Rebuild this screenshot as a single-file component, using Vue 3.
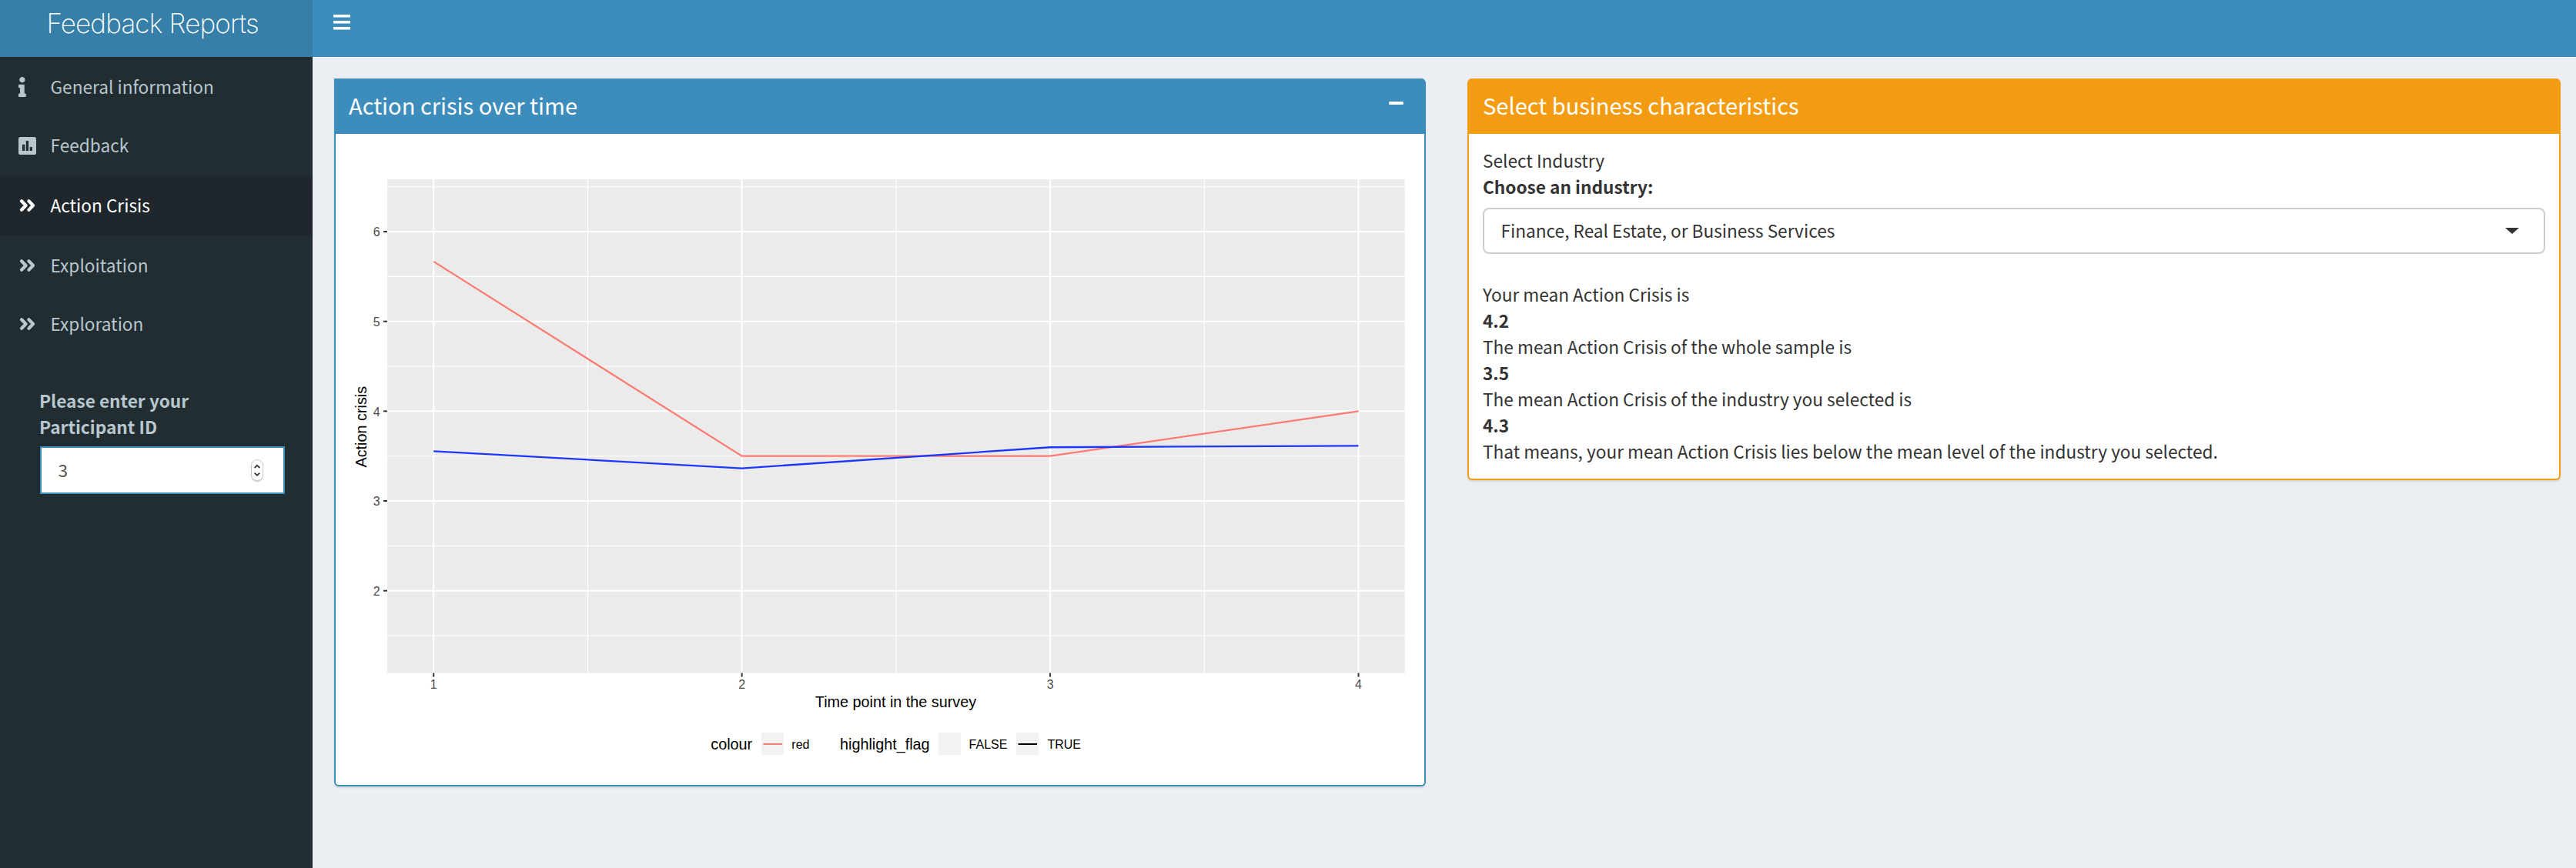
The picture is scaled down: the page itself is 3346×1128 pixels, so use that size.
<script setup>
const menu = [
  { label: 'General information', icon: 'info' },
  { label: 'Feedback', icon: 'poll' },
  { label: 'Action Crisis', icon: 'angles', active: true },
  { label: 'Exploitation', icon: 'angles' },
  { label: 'Exploration', icon: 'angles' },
]

const sx = (v) => 563.2 + (v - 1) * 400.45
const sy = (v) => 767.7 - (v - 2) * 116.67
const toPoints = (values) => values.map((v, i) => `${sx(i + 1)},${sy(v)}`).join(' ')

const xTicks = [1, 2, 3, 4]
const xMinor = [1.5, 2.5, 3.5]
const yTicks = [2, 3, 4, 5, 6]
const yMinor = [1.5, 2.5, 3.5, 4.5, 5.5, 6.5]
const participant = toPoints([5.667, 3.5, 3.5, 4])
const sample = toPoints([3.555, 3.364, 3.598, 3.615])

const summary = [
  { text: 'Your mean Action Crisis is' },
  { text: '4.2', bold: true },
  { text: 'The mean Action Crisis of the whole sample is' },
  { text: '3.5', bold: true },
  { text: 'The mean Action Crisis of the industry you selected is' },
  { text: '4.3', bold: true },
  { text: 'That means, your mean Action Crisis lies below the mean level of the industry you selected.' },
]
</script>

<template>
  <div class="page">
    <header class="topbar">
      <div class="logo">Feedback Reports</div>
      <nav class="navbar">
        <svg class="bars" width="22" height="20" viewBox="0 0 22 20" fill="#fff">
          <rect y="0" width="22" height="3.4" rx=".6" />
          <rect y="8" width="22" height="3.4" rx=".6" />
          <rect y="16" width="22" height="3.4" rx=".6" />
        </svg>
      </nav>
    </header>

    <div class="main">
      <aside class="sidebar">
        <ul class="menu">
          <li v-for="item in menu" :key="item.label" :class="{ active: item.active }">
            <span class="icon">
              <svg v-if="item.icon === 'info'" width="9.75" height="26" viewBox="0 0 192 512" fill="currentColor">
                <path d="M20 424.229h20V279.771H20c-11.046 0-20-8.954-20-20V212c0-11.046 8.954-20 20-20h112c11.046 0 20 8.954 20 20v212.229h20c11.046 0 20 8.954 20 20V492c0 11.046-8.954 20-20 20H20c-11.046 0-20-8.954-20-20v-47.771c0-11.046 8.954-20 20-20zM96 0C56.235 0 24 32.235 24 72s32.235 72 72 72 72-32.235 72-72S135.764 0 96 0z" />
              </svg>
              <svg v-else-if="item.icon === 'poll'" width="23" height="23" viewBox="0 0 23 23">
                <rect width="23" height="23" rx="2.6" fill="currentColor" />
                <rect x="5" y="9.8" width="3.3" height="8.2" rx=".6" fill="#222d32" />
                <rect x="9.8" y="5" width="3.3" height="13" rx=".6" fill="#222d32" />
                <rect x="14.7" y="13" width="3.3" height="5" rx=".6" fill="#222d32" />
              </svg>
              <svg v-else width="23" height="18" viewBox="0 0 23 18" fill="none" stroke="currentColor" stroke-width="4.2" stroke-linecap="round" stroke-linejoin="round">
                <path d="M4 3.2L9.6 9L4 14.8M13.4 3.2L19 9L13.4 14.8" />
              </svg>
            </span>
            <span>{{ item.label }}</span>
          </li>
        </ul>
        <div class="field">
          <div class="field-label">Please enter your<br />Participant ID</div>
          <div class="number">
            <span>3</span>
            <span class="spinner">
              <svg width="14" height="24" viewBox="0 0 14 24" fill="none" stroke="#3a3a3a" stroke-width="1.9">
                <path d="M3.6 9L7 5.9L10.4 9M3.6 15.6L7 18.7L10.4 15.6" />
              </svg>
            </span>
          </div>
        </div>
      </aside>

      <main class="content">
        <section class="box primary">
          <div class="box-header">
            <h3>Action crisis over time</h3>
            <span class="collapse"></span>
          </div>
          <svg class="plot" width="1414" height="846" viewBox="436 174 1414 846">
            <rect x="503" y="233" width="1321.7" height="641.6" fill="#ebebeb" />
            <g stroke="#fff" stroke-width="1.1">
              <line v-for="v in yMinor" :key="'ym' + v" x1="503" x2="1824.7" :y1="sy(v)" :y2="sy(v)" />
              <line v-for="v in xMinor" :key="'xm' + v" y1="233" y2="874.6" :x1="sx(v)" :x2="sx(v)" />
            </g>
            <g stroke="#fff" stroke-width="2">
              <line v-for="v in yTicks" :key="'y' + v" x1="503" x2="1824.7" :y1="sy(v)" :y2="sy(v)" />
              <line v-for="v in xTicks" :key="'x' + v" y1="233" y2="874.6" :x1="sx(v)" :x2="sx(v)" />
            </g>
            <g stroke="#333" stroke-width="2">
              <line v-for="v in yTicks" :key="'yt' + v" x1="498" x2="503" :y1="sy(v)" :y2="sy(v)" />
              <line v-for="v in xTicks" :key="'xt' + v" y1="874.6" y2="879.6" :x1="sx(v)" :x2="sx(v)" />
            </g>
            <g class="tick">
              <text v-for="v in yTicks" :key="'yl' + v" x="493.6" :y="sy(v) + 6.3" text-anchor="end">{{ v }}</text>
              <text v-for="v in xTicks" :key="'xl' + v" :x="sx(v)" y="895.3" text-anchor="middle">{{ v }}</text>
            </g>
            <polyline :points="participant" fill="none" stroke="#fb7b72" stroke-width="2.3" />
            <polyline :points="sample" fill="none" stroke="#1c36ff" stroke-width="2.3" />

            <g class="title">
              <text x="1163.5" y="918.5" text-anchor="middle">Time point in the survey</text>
              <text transform="translate(476.3 554.7) rotate(-90)" text-anchor="middle">Action crisis</text>
              <text x="923.3" y="974">colour</text>
              <text x="1091" y="974">highlight_flag</text>
            </g>
            <g fill="#f2f2f2">
              <rect x="989" y="952" width="29" height="29" />
              <rect x="1219" y="952" width="29" height="29" />
              <rect x="1320" y="952" width="29" height="29" />
            </g>
            <line x1="991.4" x2="1016" y1="967" y2="967" stroke="#fb7b72" stroke-width="2" />
            <line x1="1322.6" x2="1347" y1="967" y2="967" stroke="#000" stroke-width="2" />
            <g class="legend">
              <text x="1028.3" y="973.2">red</text>
              <text x="1258.6" y="973.2">FALSE</text>
              <text x="1360.4" y="973.2">TRUE</text>
            </g>
          </svg>
        </section>

        <section class="box warning">
          <div class="box-header">
            <h3>Select business characteristics</h3>
          </div>
          <div class="box-body">
            <div>Select Industry</div>
            <div class="bold">Choose an industry:</div>
            <div class="select">
              <span>Finance, Real Estate, or Business Services</span>
              <i class="caret"></i>
            </div>
            <div v-for="line in summary" :key="line.text" :class="{ bold: line.bold }">{{ line.text }}</div>
          </div>
        </section>
      </main>
    </div>
  </div>
</template>

<style>
body {
  margin: 0;
  background: #ebeef3;
}
</style>

<style scoped>
.page {
  width: 3346px;
  height: 1128px;
  display: flex;
  flex-direction: column;
  overflow: hidden;
  background: #ebeef3;
  color: #333;
  font: 400 22.65px/34px "Noto Sans CJK SC", "Noto Sans", sans-serif;
}
.topbar {
  display: flex;
  height: 74px;
  flex: none;
}
.logo {
  width: 406px;
  box-sizing: border-box;
  padding: 1px 0 0 60.5px;
  background: #367fa9;
  color: #fff;
  font: 160 35px/59px Inter, "Liberation Sans", sans-serif;
  letter-spacing: -0.85px;
  white-space: nowrap;
}
.navbar {
  flex: 1;
  padding: 19px 27px;
  box-sizing: border-box;
  background: #3c8dbc;
}
.bars {
  display: block;
}
.main {
  display: flex;
  flex: 1;
}
.sidebar {
  width: 406px;
  flex: none;
  background: #222d32;
  color: #b8c7ce;
}
.menu {
  list-style: none;
  margin: 0;
  padding: 0;
  display: grid;
  grid-template-rows: 76px 78px 78px 76px 76px;
}
.menu li {
  display: flex;
  align-items: center;
  padding: 1px 0 0 24px;
}
.menu li:nth-child(2),
.menu li.active {
  padding: 0 0 0 24px;
}
.menu li.active {
  background: #1f272d;
  color: #fff;
}
.icon {
  width: 41.5px;
  display: flex;
}
.field {
  margin: 46px 36px 0 51px;
}
.field-label {
  font-weight: 700;
}
.number {
  height: 62px;
  margin: 8px 0 0 1px;
  padding: 0 26px 0 21.5px;
  box-sizing: border-box;
  border: 2px solid #3c8dbc;
  background: #fff;
  color: #555;
  display: flex;
  align-items: center;
  justify-content: space-between;
}
.spinner {
  width: 16px;
  height: 28px;
  box-sizing: border-box;
  border: 1px solid #c9c9c9;
  border-radius: 8px;
  box-shadow: 0 1px 1px rgba(0, 0, 0, 0.25);
  display: flex;
  align-items: center;
  justify-content: center;
}
.content {
  flex: 1;
  display: flex;
  align-items: flex-start;
  gap: 54px;
  padding: 28px 20px 0 28px;
}
.box {
  box-sizing: border-box;
  border: 2px solid;
  border-top: 0;
  border-radius: 6px;
  background: #fff;
  box-shadow: 0 2px 2px rgba(0, 0, 0, 0.1);
}
.box-header {
  height: 72px;
  box-sizing: border-box;
  padding: 0 27px 4px 17px;
  display: flex;
  align-items: center;
  justify-content: space-between;
  border-radius: 4px 4px 0 0;
  color: #fff;
}
.box-header h3 {
  margin: 0;
  font-size: 29.05px;
  font-weight: 400;
}
.primary {
  width: 1418px;
  border-color: #3c8dbc;
  border-top-left-radius: 0;
}
.primary .box-header {
  background: #3c8dbc;
  border-top-left-radius: 0;
}
.warning {
  width: 1420px;
  border-color: #f39c12;
}
.warning .box-header {
  padding-left: 18px;
  background: #f39c12;
}
.collapse {
  width: 19px;
  height: 4.6px;
  margin-bottom: 4px;
  border-radius: 1.5px;
  background: #fff;
}
.plot {
  display: block;
}
.plot text {
  font-family: "Liberation Sans", Arial, sans-serif;
}
.tick text {
  font-size: 16px;
  fill: #4d4d4d;
}
.title text {
  font-size: 19.8px;
  fill: #000;
}
.legend text {
  font-size: 16px;
  fill: #000;
}
.box-body {
  padding: 18px 18px 18px;
}
.bold {
  font-weight: 700;
}
.select {
  height: 60px;
  margin: 10px 0 36px;
  padding: 0 32px 1px 21.5px;
  box-sizing: border-box;
  border: 2px solid #ccc;
  border-radius: 8px;
  display: flex;
  align-items: center;
  justify-content: space-between;
}
.caret {
  border: 9px solid transparent;
  border-top: 8px solid #333;
  border-bottom: 0;
}
</style>
